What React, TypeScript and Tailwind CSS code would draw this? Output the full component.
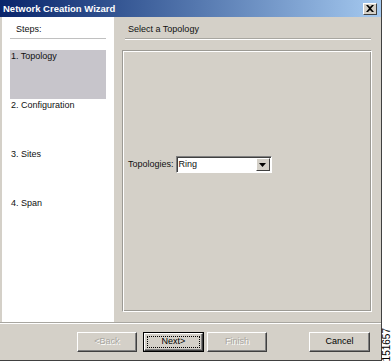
import React from 'react';

const steps = ['1. Topology', '2. Configuration', '3. Sites', '4. Span'];

const WinButton: React.FC<{ label: string; disabled?: boolean; isDefault?: boolean; className?: string }> = ({
  label,
  disabled,
  isDefault,
  className = '',
}) => {
  if (isDefault) {
    return (
      <div className={`h-[20px] border border-black ${className}`}>
        <div className="h-full border-t border-l border-t-white border-l-white border-r border-b border-r-[#404040] border-b-[#404040] shadow-[inset_-1px_-1px_#808080] flex items-center justify-center p-[2px]">
          <div className="w-full h-full border border-dotted border-black flex items-center justify-center text-black">
            {label}
          </div>
        </div>
      </div>
    );
  }
  return (
    <div
      className={`h-[20px] border-t border-l border-t-white border-l-white border-r border-b border-r-[#404040] border-b-[#404040] shadow-[inset_-1px_-1px_#808080] flex items-center justify-center ${className}`}
    >
      <span className={disabled ? 'text-[#a8a6a0] [text-shadow:1px_1px_0_#ffffff]' : 'text-black'}>{label}</span>
    </div>
  );
};

export default function App() {
  return (
    <div className="w-[392px] h-[363px] bg-white flex font-['Liberation_Sans',Arial,sans-serif] text-[9px] text-[#101010]">
      <div className="w-[384px] h-[361px] bg-[#d4d0c8] border-r border-r-[#404040] border-b border-b-[#404040] flex flex-col">
        {/* title bar */}
        <div className="h-[17px] bg-gradient-to-r from-[#0a246a] to-[#a6caf0] flex items-center justify-between pl-[3px] pr-[4px]">
          <span className="text-white font-bold text-[9.5px] leading-none">Network Creation Wizard</span>
          <div className="w-[14px] h-[12px] bg-[#d4d0c8] border-t border-l border-t-white border-l-white border-r border-b border-r-[#404040] border-b-[#404040] flex items-center justify-center">
            <svg width="8" height="7" viewBox="0 0 8 7">
              <path d="M0 0 L2 0 L4 2 L6 0 L8 0 L5 3.5 L8 7 L6 7 L4 5 L2 7 L0 7 L3 3.5 Z" fill="black" />
            </svg>
          </div>
        </div>

        {/* body */}
        <div className="flex flex-1">
          {/* steps */}
          <div className="w-[112px] ml-[2px] bg-white flex flex-col px-[8px]">
            <div className="h-[21px] pt-[6px] pl-[6px] leading-[13px]">Steps:</div>
            <div className="border-b border-b-[#c0c0c0]" />
            <div className="mt-[11px] flex flex-col">
              {steps.map((s, i) => (
                <div
                  key={s}
                  className={`h-[49px] leading-[12px] pl-[1px] ${i === 0 ? 'bg-[#c7c5cb]' : ''}`}
                >
                  {s}
                </div>
              ))}
            </div>
          </div>

          {/* content */}
          <div className="flex-1 flex flex-col">
            <div className="h-[21px] pt-[6px] pl-[14px] leading-[13px]">Select a Topology</div>
            <div className="ml-[11px] mr-[10px] border-b border-b-[#a8a6a0] shadow-[0_1px_0_#ffffff]" />
            <div className="flex-1 ml-[8px] mr-[9px] mt-[11px] mb-[10px] border border-t-[#9c9a94] border-l-[#9c9a94] border-r-white border-b-white shadow-[inset_1px_1px_#ffffff,inset_-1px_-1px_#9c9a94] flex items-center pl-[5px]">
              <div className="flex items-center gap-[2px] mt-[-33px]">
                <span>Topologies:</span>
                <div className="w-[96px] h-[17px] bg-white border-t border-l border-t-[#808080] border-l-[#808080] border-r border-b border-r-white border-b-white shadow-[inset_1px_1px_#404040] flex items-center justify-between">
                  <span className="pl-[2px] leading-none">Ring</span>
                  <div className="w-[14px] h-[13px] mr-[1px] bg-[#d4d0c8] border-t border-l border-t-white border-l-white border-r border-b border-r-[#404040] border-b-[#404040] flex items-center justify-center">
                    <svg width="7" height="4" viewBox="0 0 7 4">
                      <path d="M0 0 L7 0 L3.5 4 Z" fill="black" />
                    </svg>
                  </div>
                </div>
              </div>
            </div>
          </div>
        </div>

        {/* button bar */}
        <div className="h-[38px] border-t border-t-[#a8a6a0] shadow-[inset_0_1px_#ffffff] flex items-start pt-[9px] pl-[77px]">
          <WinButton label="<Back" disabled className="w-[60px]" />
          <WinButton label="Next>" isDefault className="w-[61px] ml-[6px]" />
          <WinButton label="Finish" disabled className="w-[60px] ml-[3px]" />
          <WinButton label="Cancel" className="w-[61px] ml-[42px]" />
        </div>
      </div>

      <div className="flex-1 flex items-end justify-center pb-[2px]">
        <span className="[writing-mode:vertical-rl] rotate-180 text-[10px] leading-none text-black">151657</span>
      </div>
    </div>
  );
}
